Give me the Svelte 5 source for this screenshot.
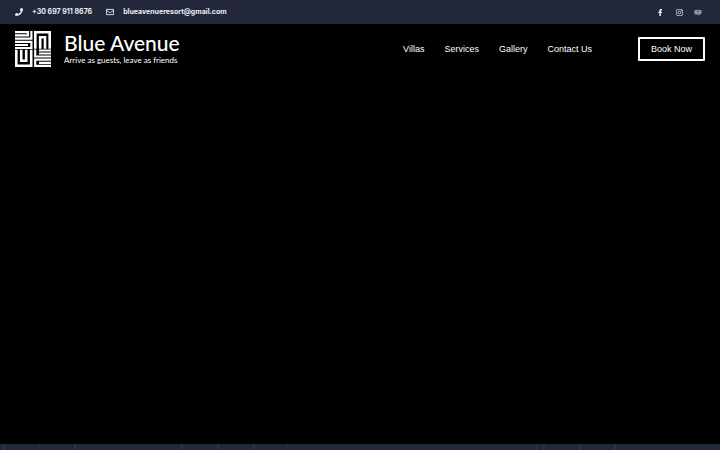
<script lang="ts">
    const links: string[] = ["Villas", "Services", "Gallery", "Contact Us"];

    // x position and width of the faint seams in the bottom band
    const seams: Array<[number, number]> = [
        [3, 2], [39, 1], [74, 2], [181, 2], [217, 2], [253, 2], [287, 1],
        [536, 1], [543, 2], [579, 2], [614, 2]
    ];
</script>

<div class="page">
    <div class="topbar">
        <div class="contacts">
            <a class="phone" href="tel:+306979118676">
                <svg class="icon" viewBox="0 0 512 512"><path d="M493 25 389 1c-11-3-23 3-27 14l-48 112c-4 10-1 22 7 28l61 50c-36 77-99 140-177 177l-50-61c-7-8-18-11-28-7L15 362C4 366-2 378 1 389l24 104c2 11 12 19 23 19 256 0 464-207 464-464 0-11-8-21-19-23z" /></svg>
                +30 697 911 8676
            </a>
            <a class="mail" href="mailto:blueavenueresort@gmail.com">
                <svg class="icon" viewBox="0 0 512 512"><path fill="none" stroke="currentColor" stroke-width="56" d="M28 88h456v336H28zM28 150l190 133q38 30 76 0l190-133" /></svg>
                blueavenueresort@gmail.com
            </a>
        </div>
        <div class="social">
            <a href="#facebook" aria-label="Facebook">
                <svg viewBox="0 0 320 512"><path d="m279 288 14-93h-89v-60c0-25 12-50 52-50h41V7s-37-7-72-7c-73 0-121 44-121 125v70H23v93h81v224h100V288z" /></svg>
            </a>
            <a href="#instagram" aria-label="Instagram">
                <svg viewBox="1 1 14 14"><rect x="1.7" y="1.7" width="12.6" height="12.6" rx="3.5" /><circle cx="8" cy="8" r="2.8" /><circle class="dot" cx="11.7" cy="4.3" r="1" /></svg>
            </a>
            <a href="#tripadvisor" aria-label="Tripadvisor">
                <svg viewBox="0 0 18 16"><path d="M1 4h3q5-3 10 0h3l-2 2M1 4l2 2M7.5 12 9 14l1.5-2" /><circle cx="4.8" cy="8.5" r="3.3" /><circle cx="13.2" cy="8.5" r="3.3" /><circle class="dot" cx="4.8" cy="8.5" r="1.6" /><circle class="dot" cx="13.2" cy="8.5" r="1.6" /></svg>
            </a>
        </div>
    </div>

    <header>
        <a class="logo" href="#home">
            <svg viewBox="0 0 36 36">
                <path class="fine" d="M0 1.1H13V4.3H0M16.4 0V7.6H0M0 10.9H16.4V17H0M0 14H13" />
                <path d="M20.3 17.8V1.3H34.7V17.8M25.2 17.8V6.2H30V17.8" />
                <path d="M1.3 18.8V34.7H16.2V18.8M6.200 18.800V29.800H11.200V18.800" />
                <path class="fine" d="M36 19.500H24M36 22.500H24M20.200 18.500V25.500H36M36 28.600H20.200V34.900H36M36 31.800H24" />
            </svg>
            <span class="brand">
                <span class="name">Blue Avenue</span>
                <span class="tagline">Arrive as guests, leave as friends</span>
            </span>
        </a>
        <nav>
            {#each links as link}
                <a href="#{link}">{link}</a>
            {/each}
        </nav>
        <button>Book Now</button>
    </header>

    <main></main>

    <div class="band">
        {#each seams as [x, width]}
            <i style="left: {x / 7.2}%; width: {width}px"></i>
        {/each}
    </div>
</div>

<style>
    :global(body) {
        margin: 0;
        background: #000;
    }

    .page {
        display: flex;
        flex-direction: column;
        min-height: 100vh;
        color: #fff;
        background: #000;
        font-family: "Liberation Sans", sans-serif;
    }

    a {
        color: inherit;
        text-decoration: none;
    }

    .topbar {
        display: flex;
        align-items: center;
        justify-content: space-between;
        padding: 0 18px 0 15px;
        height: 24px;
        background: #22283a;
    }

    .contacts {
        display: flex;
        gap: 14px;
        color: #eceef2;
        font-family: Inter, sans-serif;
        font-size: 7px;
        font-weight: 700;
        line-height: 12px;
    }

    .contacts a {
        display: flex;
        align-items: center;
        gap: 9px;
    }

    .icon {
        width: 8px;
        height: 8px;
        fill: currentColor;
    }

    .social {
        display: flex;
        align-items: center;
        gap: 11px;
    }

    .social a {
        display: flex;
        justify-content: center;
        width: 8px;
    }

    .social svg {
        height: 7px;
        fill: none;
        stroke: #dfe1e6;
        stroke-width: 1.5;
    }

    .social a:first-child svg {
        fill: #fff;
        stroke: none;
    }

    .social .dot {
        fill: #dfe1e6;
        stroke: none;
    }

    header {
        display: flex;
        align-items: center;
        padding: 0 15px;
        height: 50px;
    }

    .logo {
        display: flex;
        align-items: center;
        gap: 13px;
        margin-right: auto;
    }

    .logo svg {
        width: 36px;
        height: 36px;
        fill: none;
        stroke: #fff;
        stroke-width: 2.6;
    }

    .logo .fine {
        stroke-width: 2.2;
    }

    .brand {
        display: flex;
        flex-direction: column;
        padding-bottom: 5px;
        font-family: Lato, sans-serif;
    }

    .name {
        font-size: 21px;
        font-weight: 500;
        line-height: 26px;
    }

    .tagline {
        font-size: 8px;
        line-height: 8px;
    }

    nav {
        display: flex;
        gap: 20px;
        margin-right: 46px;
        font-size: 9px;
    }

    button {
        padding: 0 11px;
        height: 24px;
        border: 2px solid #fff;
        border-radius: 1px;
        background: transparent;
        color: #fff;
        font-family: inherit;
        font-size: 9px;
        cursor: pointer;
    }

    main {
        flex: 1;
    }

    .band {
        position: relative;
        height: 6px;
        background: #22293b;
    }

    .band i {
        position: absolute;
        top: 0;
        bottom: 0;
        background: #2d3445;
    }
</style>
